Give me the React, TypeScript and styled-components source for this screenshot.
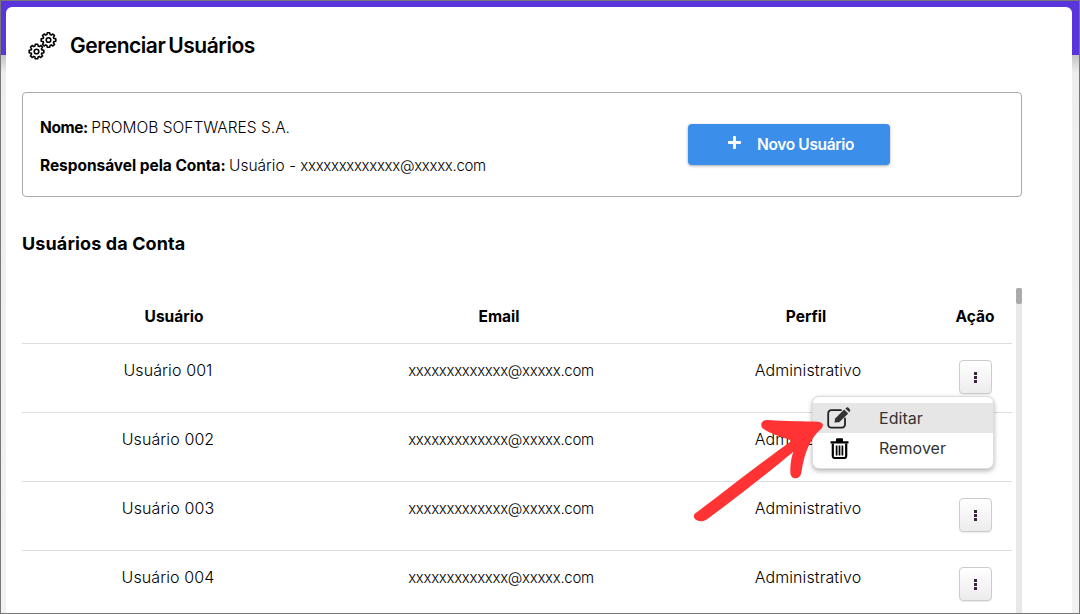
import { createGlobalStyle, styled } from "styled-components";
import { FaPlus } from "react-icons/fa";

const GlobalStyle = createGlobalStyle`
  html, body {
    margin: 0;
    padding: 0;
    background: #fff;
    font-family: Inter, "Liberation Sans", sans-serif;
    color: #000;
  }
`;

const Frame = styled.div`
  position: relative;
  box-sizing: border-box;
  width: 1080px;
  height: 614px;
  padding: 6px 7px 0 5px;
  overflow: hidden;
  border: 1px solid #777;
  background: linear-gradient(
    #5b35dc 0,
    #5b35dc 54px,
    #c4c4c4 54px,
    #eeeeee 72px,
    #f2f2f2 100%
  );
`;

const Card = styled.main`
  box-sizing: border-box;
  height: 100%;
  padding: 0 50px 0 16px;
  overflow: hidden;
  background: #fff;
  border-radius: 6px 6px 0 0;
`;

const Header = styled.header`
  display: flex;
  align-items: center;
  gap: 12px;
  height: 85px;
  padding: 0 0 8px 6px;
  box-sizing: border-box;
`;

const PageTitle = styled.h1`
  margin: 0;
  font-size: 21px;
  font-weight: 600;
  letter-spacing: -0.45px;
  word-spacing: -2px;
  color: #000;
`;

const InfoBox = styled.section`
  box-sizing: border-box;
  display: flex;
  align-items: center;
  justify-content: space-between;
  height: 105px;
  padding: 0 131px 9px 17px;
  border: 1px solid #aaa;
  border-radius: 4px;
`;

const InfoLines = styled.div`
  display: flex;
  flex-direction: column;
  gap: 17px;
  padding-top: 13px;
  font-size: 15.5px;
  line-height: 21px;
  font-weight: 300;
`;

const InfoLabel = styled.strong<{ $tight?: boolean }>`
  margin-right: -1px;
  font-weight: 700;
  letter-spacing: ${(props) => (props.$tight ? "-0.4px" : "-0.05px")};
  color: #000;
`;

const Email = styled.span`
  font-size: 15px;
  letter-spacing: -0.3px;
`;

const NewUserButton = styled.button`
  display: flex;
  align-items: center;
  justify-content: center;
  gap: 15px;
  width: 202px;
  height: 41px;
  margin-top: 9px;
  padding: 0 0 0 3px;
  border: 0;
  border-radius: 4px;
  background: #3b8eea;
  box-shadow: 0 1px 3px rgba(0, 0, 0, 0.35);
  color: #fff;
  font-family: inherit;
  font-size: 15.5px;
  font-weight: 600;
  letter-spacing: -0.35px;

  svg {
    margin-top: -5px;
  }
`;

const SectionTitle = styled.h2`
  margin: 0;
  height: 91px;
  padding-top: 36px;
  box-sizing: border-box;
  font-size: 18px;
  line-height: 22px;
  font-weight: 700;
  letter-spacing: 0.12px;
  color: #000;
`;

const TableArea = styled.div`
  display: flex;
  gap: 4px;
  height: 400px;
`;

const Table = styled.div`
  width: 990px;
`;

const columns = "304px 346px 268px 70px";

const HeadRow = styled.div`
  display: grid;
  grid-template-columns: ${columns};
  align-items: center;
  height: 56px;
  box-sizing: border-box;
  padding-top: 2px;
  border-bottom: 1px solid #ddd;
  font-size: 15.5px;
  font-weight: 700;
  text-align: center;
  color: #000;
`;

const Row = styled.div`
  display: grid;
  grid-template-columns: ${columns};
  align-items: start;
  height: 69px;
  box-sizing: border-box;
  padding-top: 16px;
  border-bottom: 1px solid #ddd;
  font-size: 16px;
  line-height: 21px;
  font-weight: 300;
  letter-spacing: 0.1px;
  text-align: center;
`;

const NameCell = styled.div`
  padding-right: 12px;
`;

const TextCell = styled.div`
  padding-left: 4px;
`;

const ActionCell = styled.div`
  position: relative;
  display: flex;
  justify-content: center;
`;

const KebabButton = styled.button`
  display: flex;
  flex-direction: column;
  align-items: center;
  justify-content: center;
  gap: 1px;
  width: 33px;
  height: 34px;
  padding: 0;
  border: 1px solid #ccc;
  border-radius: 4px;
  background: linear-gradient(#ffffff, #ececec);
  box-shadow: 0 1px 1px rgba(0, 0, 0, 0.08);
`;

const KebabDot = styled.span`
  width: 3px;
  height: 3px;
  background: #3a2340;
`;

const Menu = styled.div`
  position: absolute;
  top: 36px;
  right: 16px;
  z-index: 2;
  box-sizing: border-box;
  width: 182px;
  height: 73px;
  padding: 6px 0;
  background: #fff;
  border: 1px solid #ddd;
  border-radius: 7px;
  box-shadow: 0 2px 5px rgba(0, 0, 0, 0.3);
  text-align: left;
`;

const MenuItem = styled.div<{ $active?: boolean }>`
  display: flex;
  align-items: center;
  height: 30px;
  padding-left: 14px;
  background: ${(props) => (props.$active ? "#e6e6e6" : "transparent")};
  font-size: 16px;
  font-weight: 400;
  letter-spacing: 0.05px;
  color: #333;
`;

const MenuIcon = styled.span`
  display: flex;
  justify-content: center;
  width: 24px;
  margin-right: 28px;
`;

const ScrollTrack = styled.div`
  width: 6px;
  height: 100%;
  background: #e8e8e8;
`;

const ScrollThumb = styled.div`
  height: 16px;
  border-radius: 2px;
  background: #aaa;
`;

const ArrowOverlay = styled.svg`
  position: absolute;
  left: 679px;
  top: 339px;
  z-index: 3;
  width: 400px;
  height: 200px;
`;

// contorno de engrenagem: 8 dentes calculados em volta do centro
const gearPath = (cx: number, cy: number, outer: number, inner: number) => {
  const points: string[] = [];
  for (let i = 0; i < 8; i++) {
    const a = (i * Math.PI) / 4;
    const w = 0.2;
    [
      [inner, a - w * 1.45],
      [outer, a - w * 0.8],
      [outer, a + w * 0.8],
      [inner, a + w * 1.45],
    ].forEach(([r, t]) => {
      points.push(`${(cx + r * Math.cos(t)).toFixed(2)} ${(cy + r * Math.sin(t)).toFixed(2)}`);
    });
  }
  return `M${points.join("L")}Z`;
};

const GearsIcon = () => (
  <svg width="30" height="30" viewBox="0 0 30 30" fill="none" stroke="#000" strokeWidth="1.6" strokeLinejoin="round">
    <path d={gearPath(20.5, 9, 7.4, 5.6)} />
    <circle cx="20.5" cy="9" r="2.3" />
    <path d={gearPath(8.5, 20.5, 7.4, 5.6)} />
    <circle cx="8.5" cy="20.5" r="2.3" />
  </svg>
);

const EditIcon = () => (
  <svg width="24" height="22" viewBox="0 0 24 22">
    <path
      d="M14 3.2H4.5A3 3 0 0 0 1.2 6.2V17.5A3 3 0 0 0 4.5 20.6H15A3 3 0 0 0 18 17.5V11.5"
      fill="none"
      stroke="#222"
      strokeWidth="1.8"
      strokeLinecap="round"
    />
    <path d="M7.4 15.6L8.2 11.4L17.2 2.6L21.2 6.6L12.2 15.2Z" fill="#333" />
    <path d="M18.4 1.4L19.6 0.4Q20.4 -0.1 21.2 0.5L23 2.4Q23.6 3.2 23 4.1L22.2 5.3Z" fill="#333" />
  </svg>
);

const TrashIcon = () => (
  <svg width="19" height="21" viewBox="0 0 19 21">
    <path d="M0.5 3.2H6V1.2Q6 0.3 7 0.3H12Q13 0.3 13 1.2V3.2H18.5V5.4H0.5Z" fill="#000" />
    <path d="M2.8 5.4V18A2 2 0 0 0 4.8 20H14.2A2 2 0 0 0 16.2 18V5.4" fill="none" stroke="#000" strokeWidth="2.2" />
    <path d="M6.6 7.5V17.5M9.5 7.5V17.5M12.4 7.5V17.5" stroke="#000" strokeWidth="1.7" />
  </svg>
);

interface UserRow {
  name: string;
  email: string;
  profile: string;
}

const users: UserRow[] = [
  { name: "Usuário 001", email: "xxxxxxxxxxxxx@xxxxx.com", profile: "Administrativo" },
  { name: "Usuário 002", email: "xxxxxxxxxxxxx@xxxxx.com", profile: "Administrativo" },
  { name: "Usuário 003", email: "xxxxxxxxxxxxx@xxxxx.com", profile: "Administrativo" },
  { name: "Usuário 004", email: "xxxxxxxxxxxxx@xxxxx.com", profile: "Administrativo" },
];

export default function App() {
  return (
    <Frame>
      <GlobalStyle />
      <Card>
        <Header>
          <GearsIcon />
          <PageTitle>Gerenciar Usuários</PageTitle>
        </Header>
        <InfoBox>
          <InfoLines>
            <div>
              <InfoLabel $tight>Nome:</InfoLabel> PROMOB SOFTWARES S.A.
            </div>
            <div>
              <InfoLabel>Responsável pela Conta:</InfoLabel> Usuário - <Email>xxxxxxxxxxxxx@xxxxx.com</Email>
            </div>
          </InfoLines>
          <NewUserButton>
            <FaPlus size={15} />
            Novo Usuário
          </NewUserButton>
        </InfoBox>
        <SectionTitle>Usuários da Conta</SectionTitle>
        <TableArea>
          <Table>
            <HeadRow>
              <div>Usuário</div>
              <div>Email</div>
              <div>Perfil</div>
              <div>Ação</div>
            </HeadRow>
            {users.map((user, index) => (
              <Row key={user.name}>
                <NameCell>{user.name}</NameCell>
                <TextCell>
                  <Email>{user.email}</Email>
                </TextCell>
                <TextCell>{user.profile}</TextCell>
                <ActionCell>
                  <KebabButton>
                    <KebabDot />
                    <KebabDot />
                    <KebabDot />
                  </KebabButton>
                  {index === 0 && (
                    <Menu>
                      <MenuItem $active>
                        <MenuIcon>
                          <EditIcon />
                        </MenuIcon>
                        Editar
                      </MenuItem>
                      <MenuItem>
                        <MenuIcon>
                          <TrashIcon />
                        </MenuIcon>
                        Remover
                      </MenuItem>
                    </Menu>
                  )}
                </ActionCell>
              </Row>
            ))}
          </Table>
          <ScrollTrack>
            <ScrollThumb />
          </ScrollTrack>
        </TableArea>
      </Card>
      <ArrowOverlay viewBox="0 0 1200 600">
        <path
          fill="#ff3333"
          d="M46 520 C120 465 240 370 335 302 C300 290 270 280 252 268 C238 258 242 240 262 240 C320 244 375 244 415 245 C430 246 432 258 424 266 C392 292 372 340 364 398 C360 420 332 420 331 398 C330 375 334 352 340 335 C250 410 160 480 78 540 C55 552 32 534 46 520 Z"
        />
      </ArrowOverlay>
    </Frame>
  );
}
